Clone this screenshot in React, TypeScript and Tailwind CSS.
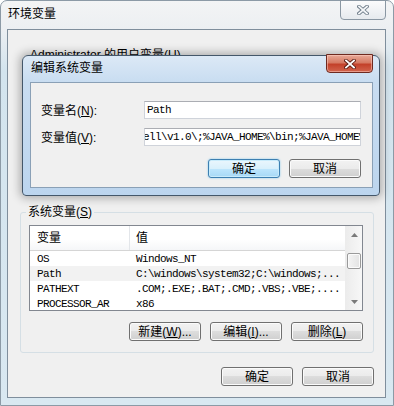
import type { ReactNode } from 'react';

const cjk = "font-['Liberation_Sans','Noto_Sans_CJK_SC',sans-serif]";
const mono = "font-['Liberation_Mono','Noto_Sans_CJK_SC',monospace] text-[11px] tracking-[-0.6px]";

function Btn({ children, primary = false }: { children: ReactNode; primary?: boolean }) {
  return (
    <div
      className={
        'w-[72px] h-[19px] flex items-center justify-center rounded-[3px] border text-[12px] leading-[14px] text-black ' +
        (primary
          ? 'border-[#3c7fb1] bg-[linear-gradient(to_bottom,#eaf6fd_0%,#d9f0fc_50%,#bee6fd_50%,#a7d9f5_100%)] shadow-[inset_0_0_0_1px_#c8ebfb,0_0_2px_#7cc4ec]'
          : 'border-[#707070] bg-[linear-gradient(to_bottom,#f2f2f2_0%,#ebebeb_50%,#dddddd_50%,#cfcfcf_100%)] shadow-[inset_0_0_0_1px_#fbfbfb]')
      }
    >
      {children}
    </div>
  );
}

function CloseX({ active }: { active: boolean }) {
  return (
    <svg width="12" height="10" viewBox="0 0 12 10">
      <path d="M2 1.5 L10 8.5 M10 1.5 L2 8.5" stroke={active ? '#5a1a10' : '#6d7b88'} strokeWidth="3.6" strokeLinecap="square" />
      <path d="M2 1.5 L10 8.5 M10 1.5 L2 8.5" stroke={active ? '#ffffff' : '#f4f6f8'} strokeWidth="1.8" strokeLinecap="square" />
    </svg>
  );
}

function Arrow({ up }: { up: boolean }) {
  return (
    <svg width="7" height="4" viewBox="0 0 7 4">
      <path d={up ? 'M0 4 L3.5 0 L7 4 Z' : 'M0 0 L3.5 4 L7 0 Z'} fill="#7a7a7a" />
    </svg>
  );
}

const rows = [
  ['OS', 'Windows_NT'],
  ['Path', 'C:\\windows\\system32;C:\\windows;...'],
  ['PATHEXT', '.COM;.EXE;.BAT;.CMD;.VBS;.VBE;....'],
  ['PROCESSOR_AR', 'x86'],
];

export default function App() {
  return (
    <div className={`relative w-[394px] h-[406px] overflow-hidden ${cjk}`}>
      {/* 环境变量 window (inactive) */}
      <div className="flex flex-col w-[394px] h-[406px] rounded-t-[7px] border border-[#8c9aa6] bg-[linear-gradient(to_bottom,#f3f4f5_0px,#eceff2_28px,#d3e4ee_70px,#d9e8f1_100%)]">
        <div className="flex items-start justify-between h-[28px]">
          <span className="pl-[7px] pt-[6px] text-[12px] leading-[15px] text-black">环境变量</span>
          <div className="mr-[7px] -mt-[1px] w-[46px] h-[20px] flex items-center justify-center rounded-b-[4px] border border-[#8a97a3] bg-[linear-gradient(to_bottom,#fbfbfc,#e6eaee)]">
            <CloseX active={false} />
          </div>
        </div>

        <div className="flex-1 ml-[6px] mr-[7px] mb-[7px] border border-[#7f8e9c] bg-[#f0f0f0] flex flex-col pl-[12px] pr-[11px]">
          <div className="h-[175px] pt-[18px] pl-[10px] text-[12px] leading-[14px] text-black">
            Administrator 的用户变量(<u>U</u>)
          </div>

          <fieldset className="border border-[#d5dfe5] rounded-[3px] pl-[8px] pr-[10px] pt-[6px] pb-[11px]">
            <legend className="-ml-[3px] px-[2px] text-[12px] leading-[14px] text-black">
              系统变量(<u>S</u>)
            </legend>
            <div className="flex h-[86px] border border-[#828790] bg-white">
              <div className="flex-1 flex flex-col overflow-hidden">
                <div className="flex h-[25px] shrink-0 border-b border-[#d5d5d5] bg-[linear-gradient(to_bottom,#ffffff_0%,#ffffff_55%,#f5f6f8_100%)] text-[12px] leading-[14px] text-black">
                  <div className="w-[100px] pl-[7px] flex items-center border-r border-[#e3e6ea]">变量</div>
                  <div className="pl-[6px] flex items-center">值</div>
                </div>
                {rows.map(([k, v]) => (
                  <div key={k} className={`flex h-[15px] shrink-0 items-center pt-[2px] text-black ${mono} ${k === 'Path' ? 'bg-[#f2f2f2]' : ''}`}>
                    <div className="w-[100px] pl-[7px] whitespace-nowrap overflow-hidden">{k}</div>
                    <div className="pl-[6px] whitespace-nowrap">{v}</div>
                  </div>
                ))}
              </div>
              <div className="w-[17px] flex flex-col border-l border-[#ececec] bg-[linear-gradient(to_right,#ececec,#f7f7f7)]">
                <div className="h-[17px] flex items-center justify-center"><Arrow up /></div>
                <div className="flex-1 flex flex-col px-[1px] pt-[10px]">
                  <div className="h-[16px] rounded-[2px] border border-[#9a9a9a] bg-[linear-gradient(to_right,#f4f4f4,#e3e3e3)] shadow-[inset_0_0_0_1px_#fbfbfb]" />
                </div>
                <div className="h-[17px] flex items-center justify-center"><Arrow up={false} /></div>
              </div>
            </div>
            <div className="flex justify-end gap-[9px] mt-[11px]">
              <Btn>新建(<u>W</u>)...</Btn>
              <Btn>编辑(<u>I</u>)...</Btn>
              <Btn>删除(<u>L</u>)</Btn>
            </div>
          </fieldset>

          <div className="flex justify-end gap-[9px] mt-[14px]">
            <Btn>确定</Btn>
            <Btn>取消</Btn>
          </div>
        </div>
      </div>

      {/* 编辑系统变量 dialog (active), lies over the window */}
      <div className="absolute left-[22px] top-[55px] w-[358px] h-[141px] flex flex-col rounded-t-[6px] rounded-b-[4px] border border-[#44576a] bg-[linear-gradient(to_bottom,#dce9f6_0%,#c9ddf1_18%,#bcd5ee_100%)] shadow-[0_0_10px_2px_rgba(0,0,0,0.3)]">
        <div className="flex items-start justify-between h-[26px]">
          <span className="pl-[8px] pt-[5px] text-[12px] leading-[15px] text-black">编辑系统变量</span>
          <div className="mr-[6px] -mt-[2px] w-[47px] h-[19px] flex items-center justify-center rounded-b-[4px] border border-[#6e2a20] bg-[linear-gradient(to_bottom,#e8a998_0%,#d67a63_45%,#c3412a_55%,#d2654e_100%)] shadow-[inset_0_0_0_1px_rgba(255,210,200,0.5)]">
            <CloseX active />
          </div>
        </div>
        <div className="flex-1 ml-[7px] mr-[6px] mb-[7px] border border-[#8aa0b6] bg-[#f0f0f0] pl-[10px] pr-[11px] pt-[18px] flex flex-col">
          <div className="flex flex-col gap-[9px] text-[12px] leading-[14px] text-black">
            <div className="flex items-center">
              <div className="w-[103px] pt-[2px]">变量名(<u>N</u>):</div>
              <div className={`flex-1 h-[18px] flex items-center overflow-hidden border border-[#cfd3da] border-t-[#abadb3] bg-white pl-[2px] ${mono}`}>
                Path
              </div>
            </div>
            <div className="flex items-center">
              <div className="w-[103px] pt-[2px]">变量值(<u>V</u>):</div>
              <div className={`flex-1 h-[18px] flex items-center overflow-hidden border border-[#cfd3da] border-t-[#abadb3] bg-white ${mono}`}>
                <span className="-ml-[2px] whitespace-nowrap">ell\v1.0\;%JAVA_HOME%\bin;%JAVA_HOME%\jre\bin</span>
              </div>
            </div>
          </div>
          <div className="flex justify-end gap-[9px] mt-[13px]">
            <Btn primary>确定</Btn>
            <Btn>取消</Btn>
          </div>
        </div>
      </div>
    </div>
  );
}
